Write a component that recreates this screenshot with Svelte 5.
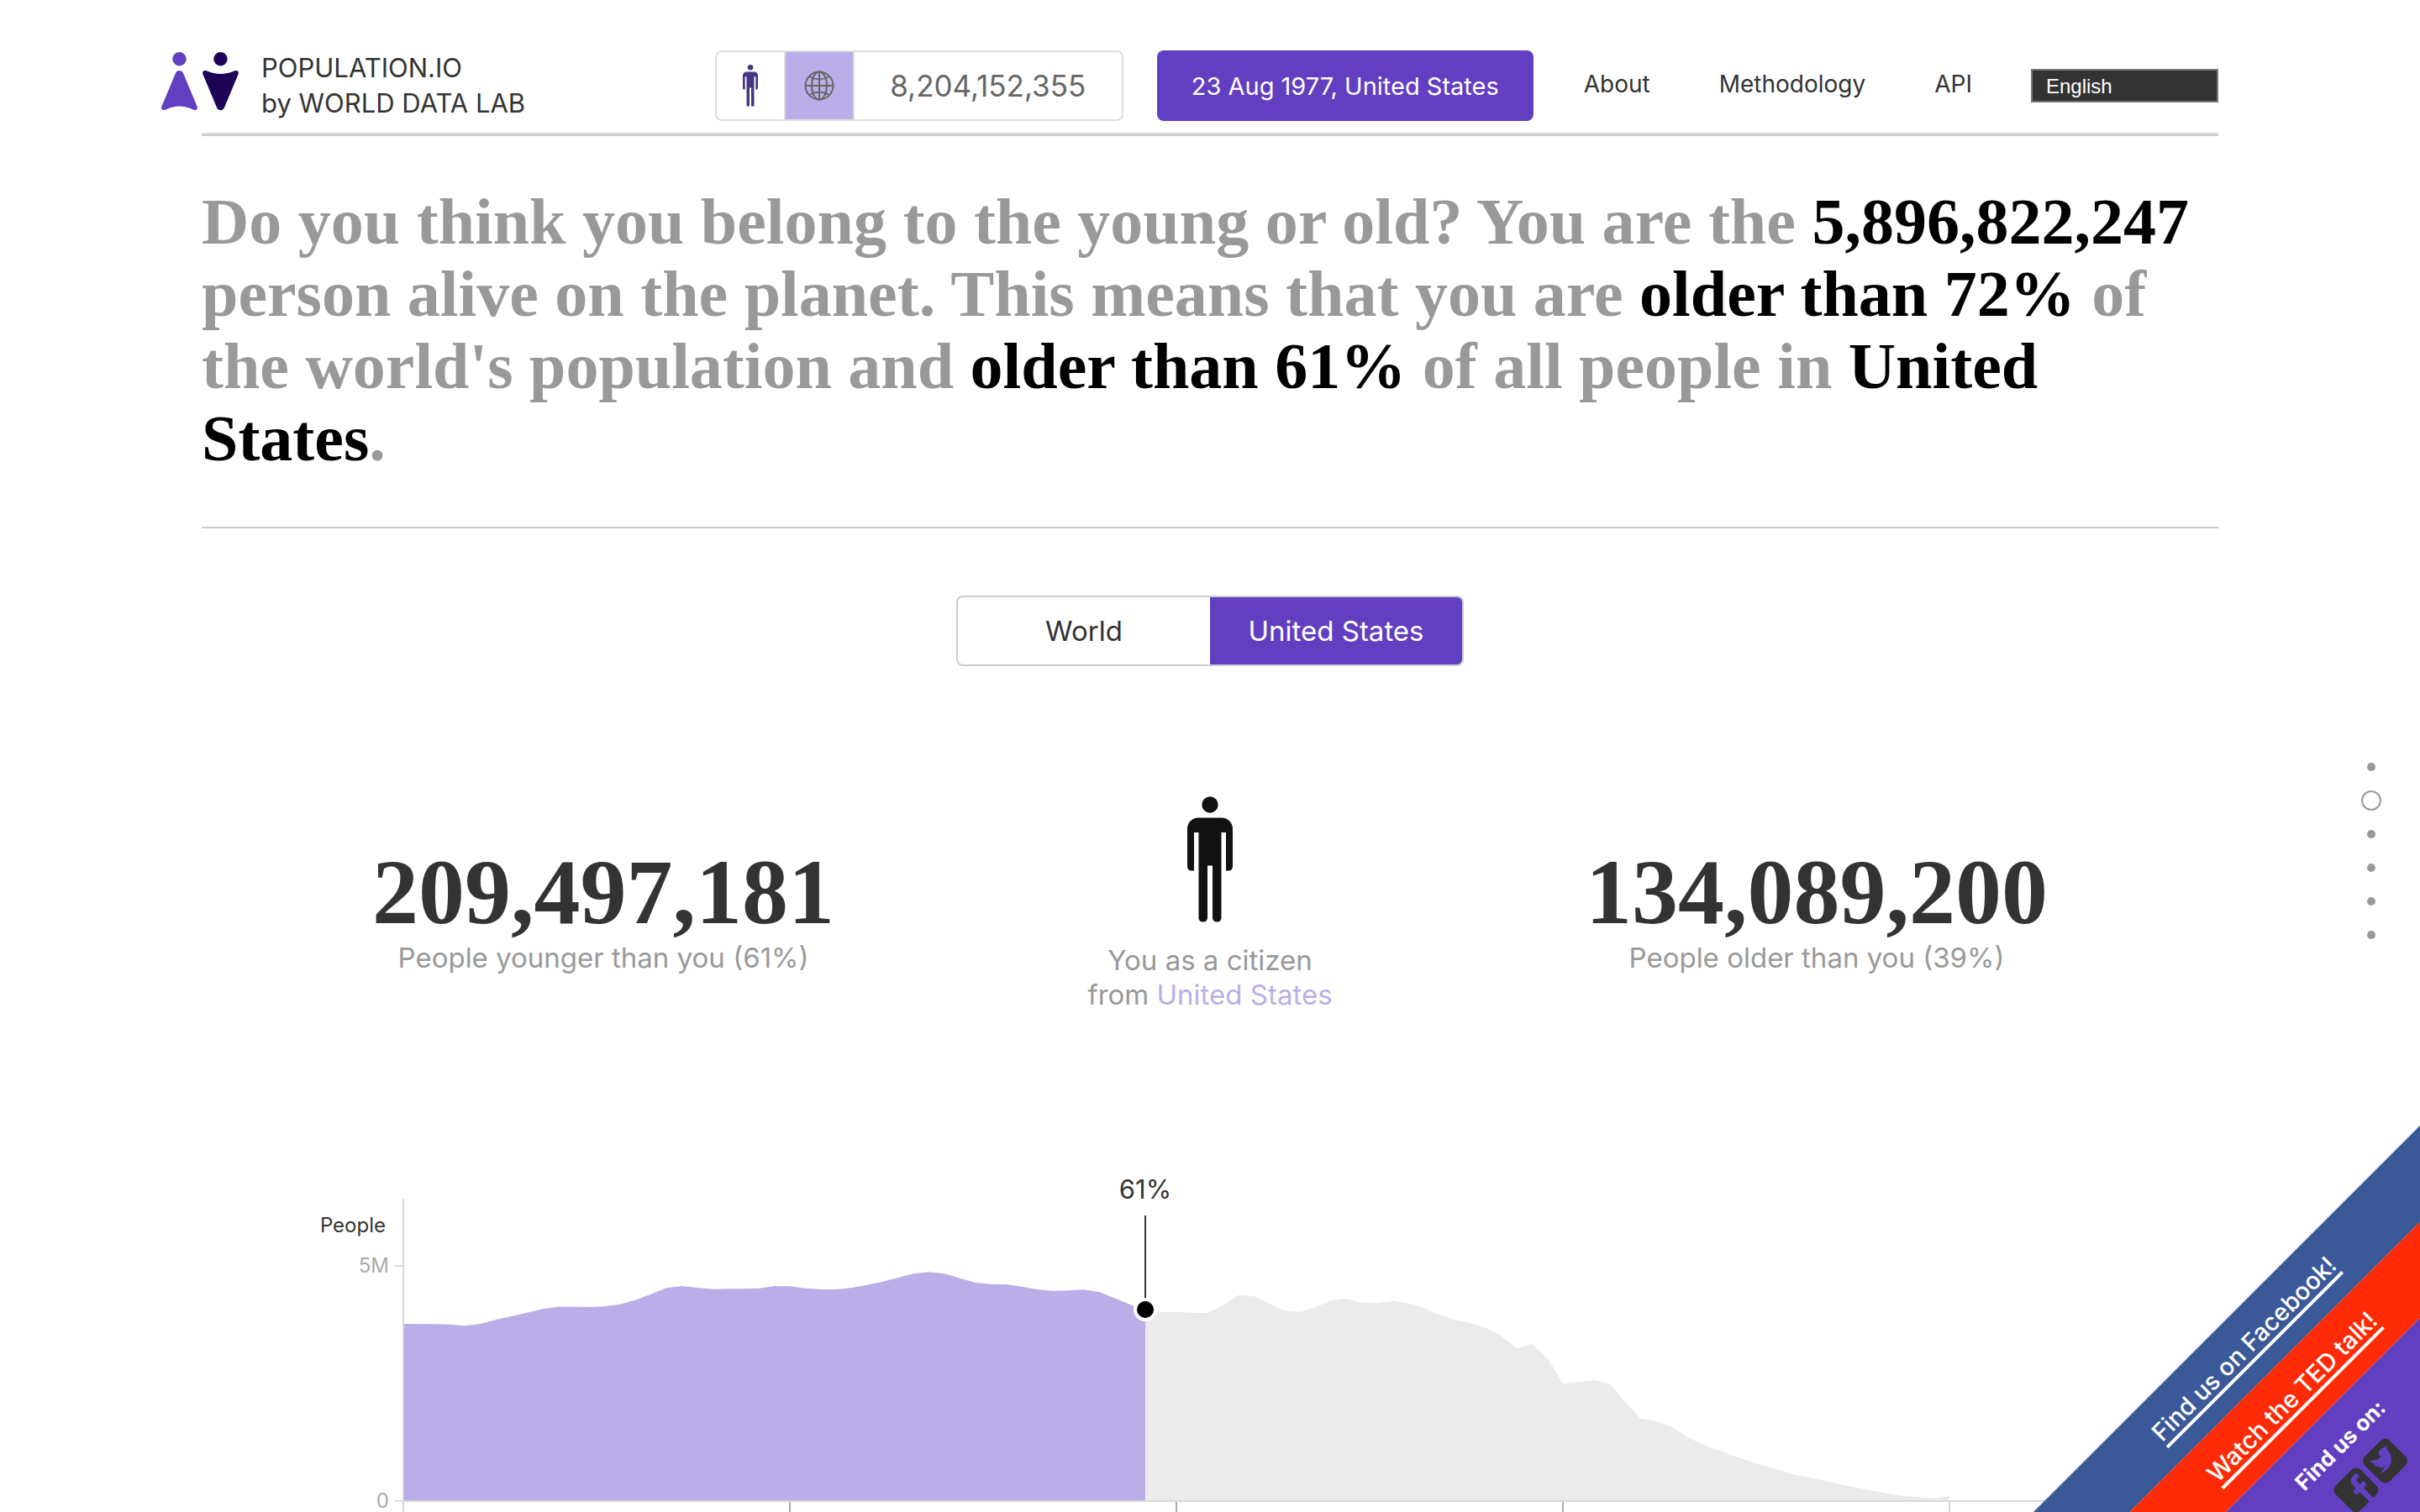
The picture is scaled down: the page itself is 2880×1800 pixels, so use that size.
<script>
  const sections = ['Home', 'Your place', 'Milestones', 'Birthdays', 'Life expectancy', 'Your life'];
  const activeSection = 1;
  let scope = $state('country');
  let language = $state('en');

  // Height above the baseline for every year of age, 0 to 100, in thirds of a unit.
  const population = [
    633, 632, 632, 631, 626, 633, 648, 660, 673, 686, 694, 694, 693, 695, 703, 718, 739, 761, 768, 762,
    757, 758, 758, 760, 768, 767, 760, 756, 756, 762, 772, 784, 798, 812, 818, 812, 796, 780, 775, 774,
    766, 756, 751, 752, 755, 747, 725, 702, 681, 675, 676, 673, 672, 699, 735, 732, 705, 680, 675, 693,
    716, 723, 708, 707, 715, 706, 690, 666, 647, 637, 619, 590, 545, 561, 511, 420, 426, 431, 420, 357,
    295, 286, 266, 230, 203, 183, 162, 143, 127, 111, 94, 85, 72, 59, 47, 37, 27, 19, 14, 10, 18
  ];
  const age = 48;
  const left = 240;
  const base = 387;
  const step = 18.4;
  const px = (i) => (left + i * step).toFixed(1);
  const py = (i) => (base - population[i] / 3).toFixed(1);

  function area(from, to) {
    let d = `M${px(from)} ${base}`;
    for (let i = from; i <= to; i++) d += `L${px(i)} ${py(i)}`;
    return d + `L${px(to)} ${base}Z`;
  }
</script>

{#snippet person()}
  <svg class="person" viewBox="0 0 54 150" aria-hidden="true">
    <circle cx="27" cy="10" r="9.7" />
    <path d="M13 25.500H41A13 13 0 0 1 54 38.500V83Q54 88.500 49 88.500H46V43H40.500V145A5.300 5.300 0 0 1 30 145V82.500H24V145A5.300 5.300 0 0 1 13.500 145V43H8V88.500H5Q0 88.500 0 83V38.500A13 13 0 0 1 13 25.500Z" />
  </svg>
{/snippet}

<div class="page">
  <header class="bar">
    <a class="logo" href="#home">
      <svg class="mark" viewBox="0 0 92 70" aria-hidden="true">
        <g fill="#623ec1">
          <circle cx="21.500" cy="8.200" r="8.200" />
          <path d="M21.500 22Q24.500 22 26 25L42.500 64.500Q44 69.500 39 69Q30 64.500 21.500 64.500Q13 64.500 4 69Q-1 69.500 .5 64.500L17 25Q18.500 22 21.500 22Z" />
        </g>
        <g fill="#1e0356">
          <circle cx="70.500" cy="8.200" r="8.200" />
          <path d="M53 22Q62 26 70.500 26Q79 26 88 22Q93 21.500 91.500 26.500L75 66Q73.500 69.300 70.500 69.300Q67.500 69.300 66 66L49.500 26.500Q48 21.500 53 22Z" />
        </g>
      </svg>
      <span>POPULATION.IO<br />by WORLD DATA LAB</span>
    </a>

    <div class="counter">
      <button class="cell" aria-label="Your rank">{@render person()}</button>
      <button class="cell on" aria-label="World population">
        <svg class="globe" viewBox="0 0 36 36" aria-hidden="true">
          <circle cx="18" cy="18" r="16.500" />
          <ellipse cx="18" cy="18" rx="9" ry="16.500" />
          <path d="M18 1.500V34.500M1.500 18H34.500M6 7Q18 14 30 7M6 29Q18 22 30 29" />
        </svg>
      </button>
      <span class="count">8,204,152,355</span>
    </div>

    <button class="birth">23 Aug 1977, United States</button>

    <nav class="links" aria-label="Main">
      <a href="#about">About</a>
      <a href="#methodology">Methodology</a>
      <a href="#api">API</a>
    </nav>

    <select class="lang" aria-label="Language" bind:value={language}>
      <option value="en">English</option>
      <option value="de">Deutsch</option>
      <option value="es">Español</option>
    </select>
  </header>

  <main>
    <h1>
      Do you think you belong to the young or old? You are the <b>5,896,822,247</b> person alive on the
      planet. This means that you are <b>older than 72%</b> of<br />
      the world's population and <b>older than 61%</b> of all people in <b>United<br />States</b>.
    </h1>

    <div class="toggle" role="group" aria-label="Region">
      <button class:on={scope === 'world'} onclick={() => (scope = 'world')}>World</button>
      <button class:on={scope === 'country'} onclick={() => (scope = 'country')}>United States</button>
    </div>

    <section class="stats">
      <div class="stat">
        <strong>209,497,181</strong>
        <p>People younger than you (61%)</p>
      </div>
      <div class="you">
        {@render person()}
        <p>You as a citizen<br />from <em>United States</em></p>
      </div>
      <div class="stat">
        <strong>134,089,200</strong>
        <p>People older than you (39%)</p>
      </div>
    </section>

    <svg class="chart" viewBox="0 0 2400 400" role="img" aria-label="Population by age">
      <path class="younger" d={area(0, age)} />
      <path class="older" d={area(age, 100)} />
      <path class="axis" d="M240 27V400M2320 387H230M230 107H240" />
      <path class="axis" d="M2080 388V400" />
      <path class="tick" d="M700 388V400M1160 388V400M1620 388V400" />
      <text class="unit" x="219" y="67">People</text>
      <text class="value" x="223" y="115">5M</text>
      <text class="value" x="223" y="395">0</text>
      <path class="pin" d="M1123 47V147" />
      <circle class="dot" cx="1123" cy="159" r="12" />
      <text class="share" x="1123" y="27">61%</text>
    </svg>
  </main>

  <nav class="dots" aria-label="Sections">
    {#each sections as name, i}
      <a href="#section-{i}" class:active={i === activeSection} aria-label={name}></a>
    {/each}
  </nav>

  <aside class="corner">
    <div class="ribbons">
      <div class="ribbon blue"><a href="#facebook">Find us on Facebook!</a></div>
      <div class="ribbon red"><a href="#ted">Watch the TED talk!</a></div>
      <div class="ribbon purple">
        <span>Find us on:</span>
        <div class="social">
          <a href="#facebook" aria-label="Facebook">
            <svg viewBox="0 128 1536 1536"><path d="M1248 128q119 0 203.500 84.500t84.500 203.500v960q0 119-84.500 203.500t-203.500 84.500h-188v-595h199l30-232h-229v-148q0-56 23.500-84t91.500-28l122-1v-207q-63-9-178-9-136 0-217.500 80t-81.500 226v171h-200v232h200v595h-532q-119 0-203.500-84.500t-84.500-203.500v-960q0-119 84.500-203.500t203.500-84.500h960z" /></svg>
          </a>
          <a href="#twitter" aria-label="Twitter">
            <svg viewBox="0 128 1536 1536"><path d="M1280 482q-56 25-121 34 68-40 93-117-65 38-134 51-61-66-153-66-87 0-148.500 61.500t-61.500 148.500q0 29 5 48-129-7-242-65t-192-155q-29 50-29 106 0 114 91 175-47-1-100-26v2q0 75 50 133.500t123 72.500q-29 8-51 8-13 0-39-4 21 63 74.500 104t121.500 42q-116 90-261 90-26 0-50-3 148 94 322 94 112 0 210-35.500t168-95 120.500-137 75-162 24.500-168.500q0-18-1-27 63-45 105-109zm256-66v960q0 119-84.500 203.500t-203.500 84.500h-960q-119 0-203.500-84.500t-84.500-203.500v-960q0-119 84.500-203.500t203.500-84.500h960q119 0 203.500 84.500t84.500 203.500z" /></svg>
          </a>
        </div>
      </div>
    </div>
  </aside>
</div>

<style>
  :global(body) {
    margin: 0;
    background: #fff;
  }

  .page {
    box-sizing: border-box;
    min-height: 100vh;
    padding: 0 calc(100% / 12);
    overflow: hidden;
    color: #333;
    font-family: Inter, 'Liberation Sans', sans-serif;
    font-size: 33px;
    line-height: 41px;
  }

  .page :is(a, button) {
    color: inherit;
    font: inherit;
    text-decoration: none;
  }

  button {
    margin: 0;
    padding: 0;
    border: 0;
    background: none;
    cursor: pointer;
  }

  .bar {
    display: flex;
    align-items: center;
    padding: 60px 0 16px;
    border-bottom: 2px solid #ccc;
    box-shadow: inset 0 -2px #ddd;
  }

  .bar .logo {
    display: flex;
    gap: 27px;
    margin: 0 auto 0 -48px;
    font-size: 31px;
    line-height: 42px;
  }

  .mark {
    width: 92px;
    height: 70px;
    padding-top: 2px;
  }

  .counter {
    box-sizing: border-box;
    display: flex;
    width: 486px;
    height: 84px;
    border: 2px solid #ddd;
    border-radius: 8px;
    overflow: hidden;
  }

  .cell {
    display: grid;
    place-items: center;
    box-sizing: border-box;
    width: 82px;
    border-right: 2px solid #ddd;
  }

  .cell.on {
    background: #bbaee8;
  }

  .cell .person {
    height: 50px;
    fill: #463581;
  }

  .globe {
    width: 36px;
    fill: none;
    stroke: #666;
    stroke-width: 2;
  }

  .count {
    flex: 1;
    align-self: center;
    color: #666;
    font-size: 35px;
    text-align: center;
  }

  .bar .birth {
    width: 448px;
    height: 84px;
    margin-left: 40px;
    border-radius: 8px;
    background: #623ec1;
    color: #fff;
    font-size: 29px;
  }

  .links {
    display: flex;
    gap: 82px;
    margin: 0 70px 0 60px;
    padding-bottom: 4px;
    font-size: 28px;
  }

  .lang {
    appearance: none;
    width: 223px;
    height: 40px;
    padding: 0 16px;
    border: 2px solid #767676;
    border-radius: 0;
    background: #333;
    color: #fff;
    font: 24px 'Liberation Sans', Arial, sans-serif;
  }

  h1 {
    margin: 0;
    padding: 59px 0 62px;
    border-bottom: 2px solid #ccc;
    color: #999;
    font: bold 78px/86px 'Liberation Serif', 'Times New Roman', serif;
  }

  h1 b {
    color: #000;
  }

  .toggle {
    box-sizing: border-box;
    display: grid;
    grid-template-columns: 1fr 1fr;
    width: 604px;
    height: 84px;
    margin: 80px auto 0;
    border: 2px solid #ccc;
    border-radius: 8px;
    overflow: hidden;
  }

  .toggle .on {
    background: #623ec1;
    color: #fff;
  }

  .stats {
    display: grid;
    grid-template-columns: repeat(3, 1fr);
    padding: 155px 117px 195px;
    color: #999;
    text-align: center;
  }

  .stats p {
    margin: 0;
  }

  .stat {
    padding-top: 60px;
  }

  .stat strong {
    display: block;
    margin-bottom: 4px;
    color: #333;
    font: bold 110px/108px 'Liberation Serif', 'Times New Roman', serif;
  }

  .you .person {
    display: block;
    height: 150px;
    margin: 0 auto 25px;
    fill: #111;
  }

  .you em {
    color: #bbaee8;
    font-style: normal;
  }

  .chart {
    display: block;
    width: 100%;
    overflow: visible;
  }

  .younger {
    fill: #bbaee8;
  }

  .older {
    fill: #ebebeb;
  }

  .axis,
  .tick,
  .pin {
    fill: none;
    stroke: #d8d8d8;
    stroke-width: 2;
  }

  .tick {
    stroke: #aaa;
  }

  .pin {
    stroke: #333;
  }

  .dot {
    stroke: #fff;
    stroke-width: 4;
  }

  .unit,
  .value {
    fill: #333;
    font-size: 24px;
    text-anchor: end;
  }

  .value {
    fill: #aaa;
  }

  .share {
    fill: #333;
    font-size: 31px;
    text-anchor: middle;
  }

  .dots {
    position: fixed;
    top: 50%;
    right: 46px;
    display: grid;
    justify-items: center;
    width: 24px;
    grid-auto-rows: 40px;
    align-items: center;
    margin-top: -7px;
  }

  .dots a {
    box-sizing: border-box;
    width: 10px;
    height: 10px;
    border-radius: 50%;
    background: #999;
  }

  .dots .active {
    width: 24px;
    height: 24px;
    border: 2px solid #999;
    background: none;
  }

  .corner {
    position: fixed;
    right: 0;
    bottom: 0;
    width: 460px;
    height: 460px;
    overflow: hidden;
    pointer-events: none;
  }

  .ribbons {
    position: absolute;
    top: 100%;
    left: 0;
    width: 651px;
    transform: rotate(-45deg);
    transform-origin: 0 0;
    pointer-events: auto;
    color: #fff;
    font-size: 29px;
    font-weight: 500;
    line-height: 32px;
    text-align: center;
  }

  .ribbon {
    box-sizing: border-box;
    height: 81px;
    padding: 24px 22px 0 0;
  }

  .blue {
    background: #3b5998;
  }

  .red {
    background: #ff2b06;
  }

  .purple {
    height: 240px;
    background: #623ec1;
    font-size: 26px;
    font-weight: 700;
  }

  .blue a,
  .red a {
    display: inline-block;
    border-bottom: 4px solid #fff;
  }

  .social {
    display: flex;
    justify-content: center;
    gap: 7px;
    padding-top: 14px;
  }

  .social svg {
    display: block;
    width: 42px;
    height: 42px;
    fill: #333;
  }
</style>
